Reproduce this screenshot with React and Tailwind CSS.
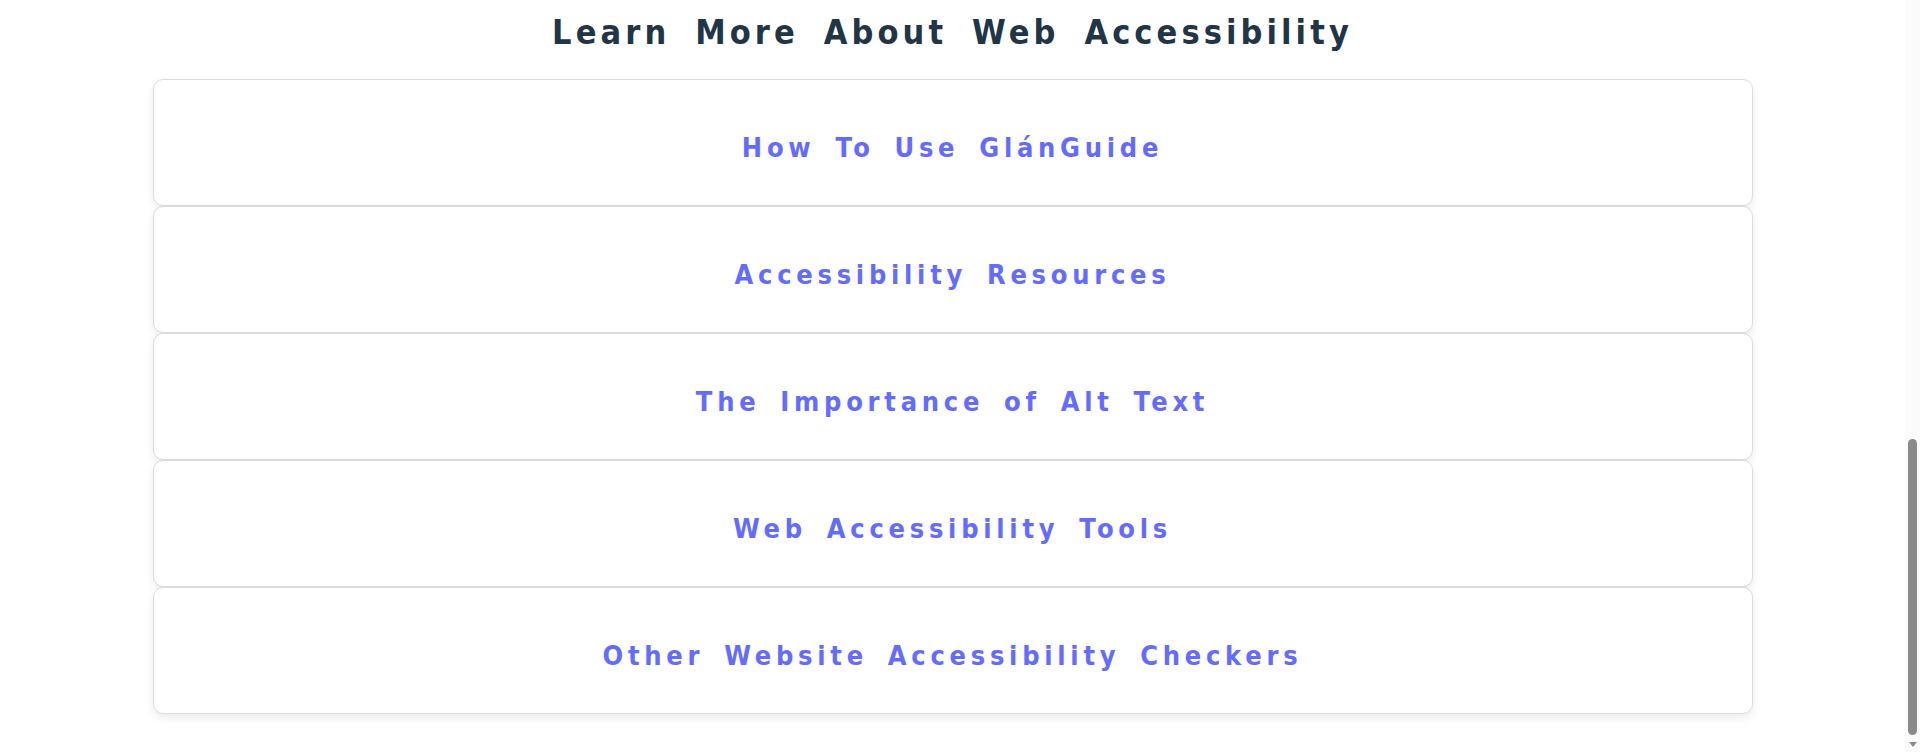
import React from "react";

const links = [
  "How To Use GlánGuide",
  "Accessibility Resources",
  "The Importance of Alt Text",
  "Web Accessibility Tools",
  "Other Website Accessibility Checkers",
];

export default function App() {
  return (
    <div
      className="flex h-[752px] w-full overflow-hidden bg-white"
      style={{ fontFamily: '"DejaVu Sans Condensed", "DejaVu Sans", sans-serif' }}
    >
      <main className="flex-1">
        <h2 className="pt-[1px] text-center text-[34px] font-bold leading-[62px] tracking-[0.12em] [word-spacing:0.3em] text-[#213547]">
          Learn More About Web Accessibility
        </h2>
        <div className="mx-auto mt-[16px] flex max-w-[1600px] flex-col">
          {links.map((t) => (
            <a
              key={t}
              href="#"
              className="flex h-[127px] items-center justify-center rounded-[10px] border border-[#dcdcdc] bg-white pt-[12px] text-[27px] font-bold tracking-[0.175em] [word-spacing:0.25em] text-[#646cff] shadow-[0_4px_8px_rgba(0,0,0,0.08)]"
            >
              {t}
            </a>
          ))}
        </div>
      </main>
      <aside className="flex w-[15px] flex-col items-center bg-[#fbfbfb] pt-[439px]">
        <div className="h-[296px] w-[9px] rounded-full bg-[#8a8a8a]" />
        <div className="mt-[7px] h-0 w-0 border-x-[4px] border-t-[5px] border-x-transparent border-t-[#8a8a8a]" />
      </aside>
    </div>
  );
}
